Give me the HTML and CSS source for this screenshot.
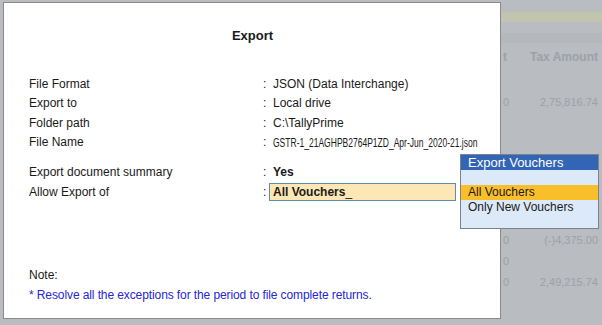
FILE: index.html
```html
<!DOCTYPE html>
<html lang="en">
<head>
  <meta charset="UTF-8">
  <meta name="viewport" content="width=device-width, initial-scale=1.0">
  <title>Export</title>
  <link rel="stylesheet" href="styles.css">
</head>
<body>

  <div class="screen">

    <!-- Export dialog -->
    <div class="dialog">
      <h1 class="title">Export</h1>

      <div class="group">
        <div class="row"><span class="label">File Format</span><span class="colon">:</span><span class="value">JSON (Data Interchange)</span></div>
        <div class="row"><span class="label">Export to</span><span class="colon">:</span><span class="value">Local drive</span></div>
        <div class="row"><span class="label">Folder path</span><span class="colon">:</span><span class="value">C:\TallyPrime</span></div>
        <div class="row"><span class="label">File Name</span><span class="colon">:</span><span class="value"><span class="narrow">GSTR-1_21AGHPB2764P1ZD_Apr-Jun_2020-21.json</span></span></div>
      </div>

      <div class="group">
        <div class="row"><span class="label">Export document summary</span><span class="colon">:</span><span class="value strong">Yes</span></div>
        <div class="row"><span class="label">Allow Export of</span><span class="colon">:</span><span class="input">All Vouchers<span class="cursor">_</span></span></div>
      </div>

      <div class="note">
        <p>Note:</p>
        <p class="note-text">* Resolve all the exceptions for the period to file complete returns.</p>
      </div>
    </div>

    <!-- Report behind the dialog -->
    <div class="report">
      <div class="band"></div>
      <div class="report-head"><span class="cut">t</span><span class="amount">Tax Amount</span></div>
      <div class="report-row first"><span class="cut">0</span><span class="amount">2,75,816.74</span></div>
      <div class="report-row"><span class="cut">0</span><span class="amount">(-)4,375.00</span></div>
      <div class="report-row"><span class="cut">0</span><span class="amount"></span></div>
      <div class="report-row"><span class="cut">0</span><span class="amount">2,49,215.74</span></div>
    </div>

    <!-- List popup -->
    <div class="popup">
      <div class="popup-head">Export Vouchers</div>
      <div class="popup-item"></div>
      <div class="popup-item selected">All Vouchers</div>
      <div class="popup-item">Only New Vouchers</div>
    </div>

  </div>

</body>
</html>
```

FILE: styles.css
```css
body {
  margin: 0;
  font-family: "Liberation Sans", Arial, sans-serif;
  font-size: 12px;
  color: #1a1a1a;
}
.screen {
  position: relative;
  display: flex;
  width: 602px;
  height: 325px;
  background-color: #b9bcc0;
  overflow: hidden;
}
.dialog {
  display: flex;
  flex-direction: column;
  box-sizing: border-box;
  width: 498px;
  height: 317px;
  margin: 2px 0 0 3px;
  padding: 0 24px 13px 25px;
  background-color: #fff;
  border: 1px solid #8a8a8a;
  overflow: hidden;
}
.title {
  margin: 25px 0 30px;
  font-size: 13px;
  line-height: 16px;
  text-align: center;
}
.group {
  margin-bottom: 10.5px;
}
.row {
  display: flex;
  align-items: center;
  height: 19.5px;
  white-space: nowrap;
}
.label {
  width: 234px;
  flex-shrink: 0;
}
.colon {
  width: 6px;
  flex-shrink: 0;
}
.value {
  padding-left: 4px;
}
.narrow {
  display: inline-block;
  font-size: 13px;
  transform: scaleX(0.655);
  transform-origin: left center;
}
.strong {
  font-weight: bold;
}
.input {
  box-sizing: border-box;
  width: 187px;
  height: 18px;
  padding-left: 3px;
  line-height: 16px;
  font-weight: bold;
  background-color: #fde8b5;
  border: 1px solid #5f8cb0;
}
.cursor {
  font-weight: normal;
}
.note {
  margin-top: auto;
}
.note p {
  margin: 0;
  line-height: 20px;
}
.note-text {
  color: #2626d6;
  letter-spacing: -0.1px;
}

.report {
  flex: 1;
  padding-top: 12px;
  color: #9da1a7;
}
.band {
  height: 9px;
  background-color: #c3c4ad;
  border-bottom: 1px solid #bfc2b6;
  margin-bottom: 25px;
  box-shadow: 0 21px 0 0 #b4b7bb;
}
.report-head,
.report-row {
  display: flex;
  justify-content: space-between;
  height: 20px;
  line-height: 20px;
  padding-right: 4px;
}
.report-head {
  font-weight: bold;
  margin-bottom: 25px;
}
.report-row {
  font-size: 11px;
  height: 21px;
  line-height: 21px;
}
.report-row.first {
  margin-bottom: 117px;
}
.cut {
  padding-left: 2px;
}

.popup {
  position: absolute;
  left: 460px;
  top: 154px;
  width: 139px;
  height: 75px;
  box-sizing: border-box;
  background-color: #dce9f8;
  border: 1px solid #7d8288;
}
.popup-head {
  height: 15px;
  line-height: 15px;
  padding-left: 7px;
  font-size: 13px;
  color: #fff;
  background-color: #3265b5;
}
.popup-item {
  height: 15px;
  line-height: 15px;
  padding-left: 7px;
}
.popup-item:first-of-type {
  height: 14px;
}
.selected {
  background-color: #f9bf2b;
}
```
